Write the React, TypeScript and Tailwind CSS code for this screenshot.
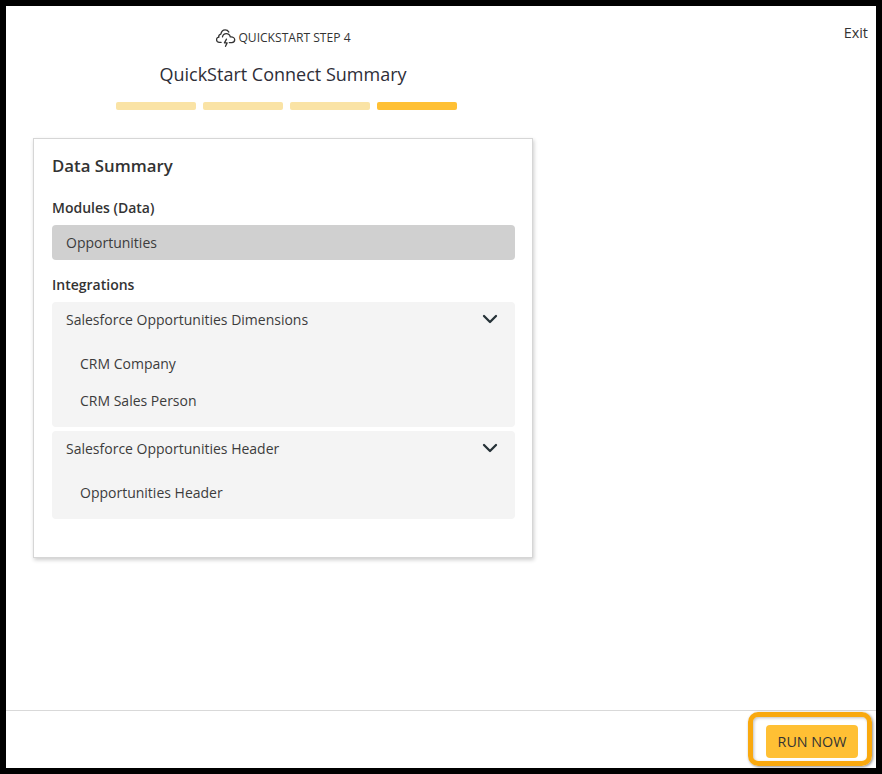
import { ChevronDown } from "lucide-react";

const bars = ["bg-[#fae3a5]", "bg-[#fae3a5]", "bg-[#fae3a5]", "bg-[#ffc034]"];

function CloudBolt() {
  return (
    <svg width="20" height="20" viewBox="0.5 1.5 18.5 18" fill="none" stroke="#333" strokeWidth="1.2" strokeLinecap="round" strokeLinejoin="round">
      <path d="M5.2 14.6H3.6C2 14.6 1 13.4 1 12.1c0-1.2.8-2.2 2-2.4" />
      <path d="M3 9.7C2.9 8.2 3.7 7.2 5 7c.4-2.4 2-4 4-4 1.600 0 2.700.8 3.400 2" />
      <path d="M6.500 9.500c.3-1.800 1.700-3 3.500-3 1.900 0 3.300 1.200 3.700 3 .2 0 .4-.1.700-.1 1.900 0 3.400 1.300 3.400 2.800s-1.200 2.500-2.700 2.500h-2.300" />
      <path d="M10.200 11.500 8.300 15h2.500l-1.500 3.200" />
    </svg>
  );
}

function Accordion({ title, items }: { title: string; items: string[] }) {
  return (
    <div className="rounded-sm bg-[#f4f4f4] pb-[8px]">
      <div className="flex h-[34px] items-center justify-between pl-[14px] pr-[13px]">
        <span className="text-[14px] text-[#3c3c3c]">{title}</span>
        <ChevronDown size={24} strokeWidth={2.3} className="text-[#263238]" />
      </div>
      <div className="pt-[9px]">
        {items.map((item) => (
          <div key={item} className="flex h-[37px] items-center pl-[28px] text-[14px] text-[#3c3c3c]">
            {item}
          </div>
        ))}
      </div>
    </div>
  );
}

export default function App() {
  return (
    <div className="relative flex h-[774px] w-[882px] flex-col border-[6px] border-black bg-white font-['Open_Sans',sans-serif] text-[#333]">
      <main className="relative flex-1 pl-[27px]">
        <span className="absolute right-[8px] top-[16px] text-[14.4px] font-normal text-[#333]">Exit</span>

        <div className="flex w-[500px] flex-col items-center">
          <div className="mt-[22px] flex h-[20px] items-center gap-[2px] pl-[1px]">
            <CloudBolt />
            <span className="text-[12.1px] leading-none text-[#333]">QUICKSTART STEP 4</span>
          </div>
          <h1 className="mt-[10px] text-[18px] font-normal leading-[32px] text-[#2e2e38]">QuickStart Connect Summary</h1>
          <div className="ml-[6px] mt-[12px] flex gap-[7px]">
            {bars.map((color, i) => (
              <div key={i} className={`h-[8px] w-[80px] rounded-[2px] ${color}`} />
            ))}
          </div>
        </div>

        <section className="mt-[28px] h-[420px] w-[500px] border border-[#d6d6d6] pl-[18px] pr-[17px] shadow-[1px_2px_4px_rgba(0,0,0,0.2)]">
          <h2 className="mt-[15px] text-[16.8px] font-semibold leading-[24px] text-[#333]">Data Summary</h2>
          <h3 className="mt-[20px] text-[14px] font-semibold leading-[20px] text-[#333]">Modules (Data)</h3>
          <div className="mt-[7px] flex h-[35px] items-center rounded-sm bg-[#d0d0d0] pl-[14px] text-[14px] text-[#3c3c3c]">
            Opportunities
          </div>
          <h3 className="mt-[15px] text-[14px] font-semibold leading-[20px] text-[#333]">Integrations</h3>
          <div className="mt-[7px] flex flex-col gap-[4px]">
            <Accordion title="Salesforce Opportunities Dimensions" items={["CRM Company", "CRM Sales Person"]} />
            <Accordion title="Salesforce Opportunities Header" items={["Opportunities Header"]} />
          </div>
        </section>
      </main>

      <footer className="flex h-[58px] items-start justify-end border-t border-[#d9d9d9] pr-[18px] pt-[14px]">
        <button className="flex h-[33px] w-[92px] items-center justify-center rounded-sm bg-[#ffc034] text-[14.3px] font-normal text-[#333]">
          RUN NOW
        </button>
      </footer>

      {/* orange callout over the button */}
      <div className="absolute bottom-[2px] right-[4px] h-[54px] w-[124px] rounded-[10px] border-[5px] border-[#f9a90f] shadow-[1px_1px_3px_rgba(0,0,0,0.45),inset_1px_1px_3px_rgba(0,0,0,0.25)]" />
    </div>
  );
}
